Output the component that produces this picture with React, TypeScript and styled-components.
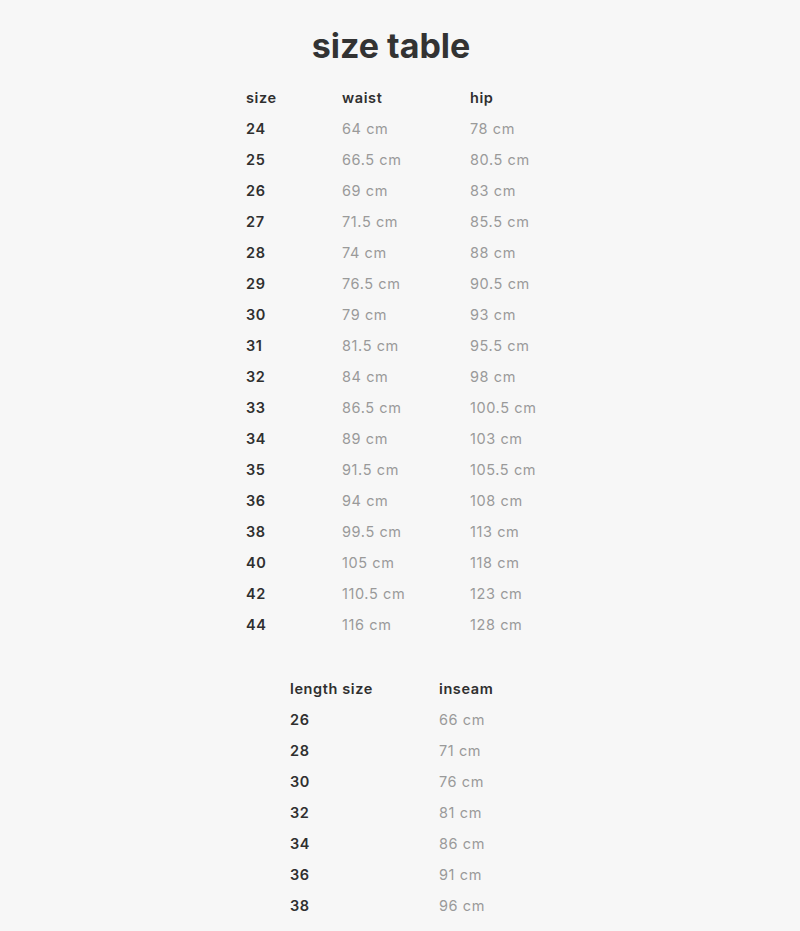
import React from "react";
import styled, { createGlobalStyle } from "styled-components";

const Global = createGlobalStyle`
  html, body { margin: 0; padding: 0; background: #f7f7f7; }
  body { font-family: "Inter", "Lato", sans-serif; }
`;

const Page = styled.div`
  width: 800px;
  min-height: 931px;
  background: #f7f7f7;
  display: flex;
  flex-direction: column;
  align-items: center;
  padding-top: 25px;
  box-sizing: border-box;
  font-family: "Inter", "Lato", sans-serif;
`;

const Title = styled.h1`
  margin: 0 18px 15px 0;
  font-size: 34px;
  line-height: 42px;
  font-weight: 700;
  color: #333333;
  letter-spacing: 0px;
`;

const Table = styled.table<{ $mt?: number }>`
  border-collapse: collapse;
  margin-top: ${(p) => p.$mt ?? 0}px;
`;

const Cell = styled.td<{ $w: number; $head?: boolean; $bold?: boolean }>`
  width: ${(p) => p.$w}px;
  padding: 0;
  height: 31px;
  font-size: 14.5px;
  line-height: 31px;
  letter-spacing: 0.6px;
  font-weight: ${(p) => (p.$head || p.$bold ? 600 : 400)};
  color: ${(p) => (p.$head || p.$bold ? "#2f2f2f" : "#9a9a9a")};
  white-space: nowrap;
  vertical-align: middle;
`;

const sizes: [string, string, string][] = [
  ["24", "64 cm", "78 cm"],
  ["25", "66.5 cm", "80.5 cm"],
  ["26", "69 cm", "83 cm"],
  ["27", "71.5 cm", "85.5 cm"],
  ["28", "74 cm", "88 cm"],
  ["29", "76.5 cm", "90.5 cm"],
  ["30", "79 cm", "93 cm"],
  ["31", "81.5 cm", "95.5 cm"],
  ["32", "84 cm", "98 cm"],
  ["33", "86.5 cm", "100.5 cm"],
  ["34", "89 cm", "103 cm"],
  ["35", "91.5 cm", "105.5 cm"],
  ["36", "94 cm", "108 cm"],
  ["38", "99.5 cm", "113 cm"],
  ["40", "105 cm", "118 cm"],
  ["42", "110.5 cm", "123 cm"],
  ["44", "116 cm", "128 cm"],
];

const lengths: [string, string][] = [
  ["26", "66 cm"],
  ["28", "71 cm"],
  ["30", "76 cm"],
  ["32", "81 cm"],
  ["34", "86 cm"],
  ["36", "91 cm"],
  ["38", "96 cm"],
];

export default function App() {
  return (
    <Page>
      <Global />
      <Title>size table</Title>
      <Table>
        <tbody>
          <tr>
            <Cell $w={96} $head>size</Cell>
            <Cell $w={128} $head>waist</Cell>
            <Cell $w={84} $head>hip</Cell>
          </tr>
          {sizes.map(([s, w, h]) => (
            <tr key={s}>
              <Cell $w={96} $bold>{s}</Cell>
              <Cell $w={128}>{w}</Cell>
              <Cell $w={84}>{h}</Cell>
            </tr>
          ))}
        </tbody>
      </Table>
      <Table $mt={33}>
        <tbody>
          <tr>
            <Cell $w={149} $head>length size</Cell>
            <Cell $w={71} $head>inseam</Cell>
          </tr>
          {lengths.map(([s, i]) => (
            <tr key={s}>
              <Cell $w={149} $bold>{s}</Cell>
              <Cell $w={71}>{i}</Cell>
            </tr>
          ))}
        </tbody>
      </Table>
    </Page>
  );
}
